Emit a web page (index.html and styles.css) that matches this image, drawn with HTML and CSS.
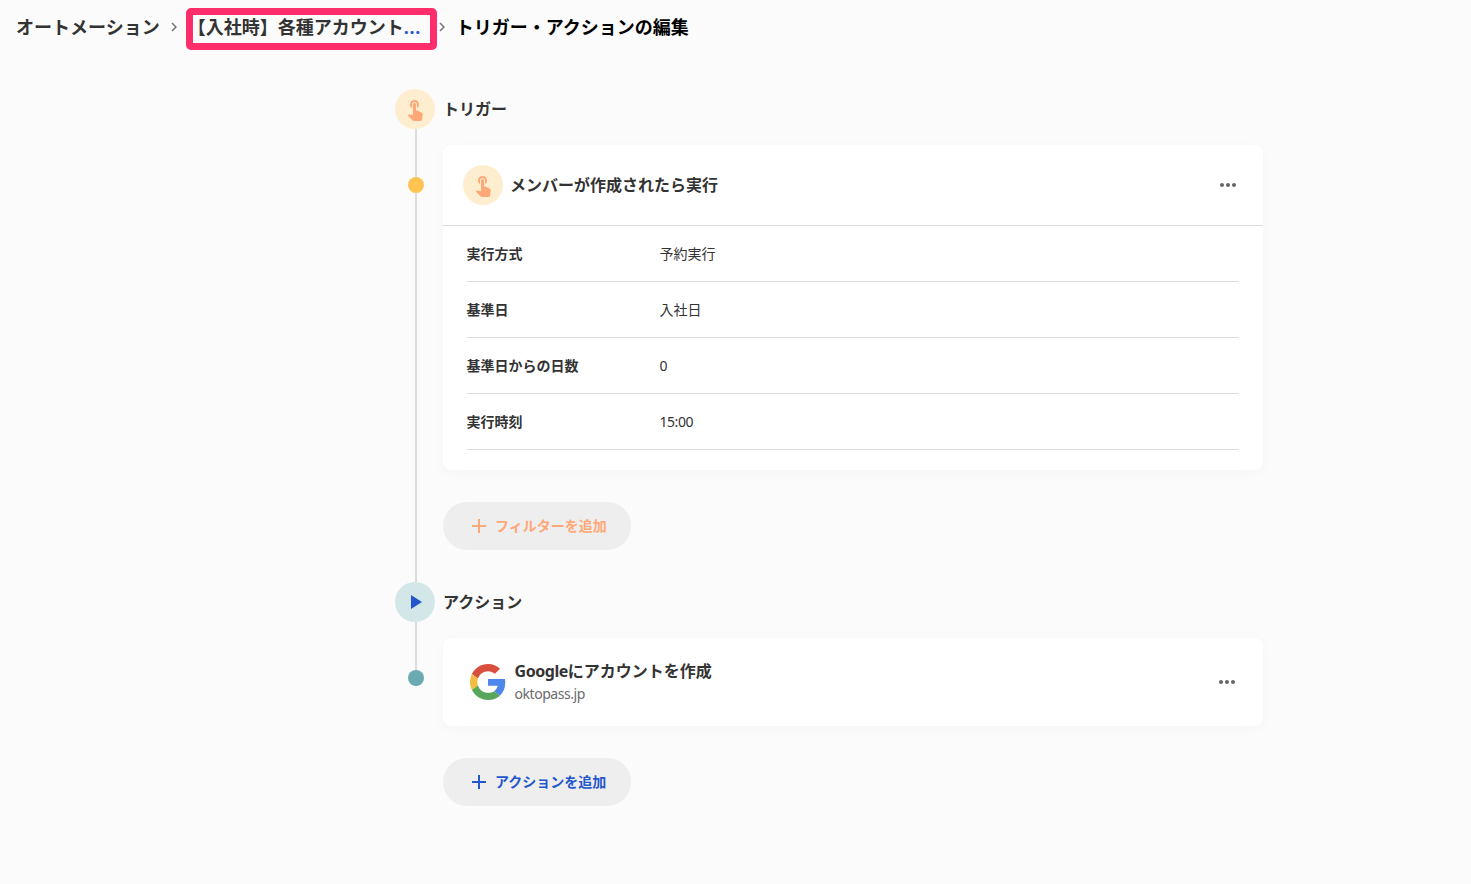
FILE: index.html
```html
<!DOCTYPE html>
<html lang="ja">
<head>
<meta charset="utf-8">
<title>トリガー・アクションの編集</title>
<link rel="stylesheet" href="styles.css">
</head>
<body>
<svg class="symbols" aria-hidden="true">
  <symbol id="touch" viewBox="0 0 24 24"><path d="M9 11.24V7.5C9 6.12 10.12 5 11.5 5S14 6.12 14 7.5v3.74c1.21-.81 2-2.18 2-3.74C16 5.01 13.99 3 11.5 3S7 5.01 7 7.5c0 1.56.79 2.93 2 3.74zm9.84 4.63l-4.54-2.26c-.17-.07-.35-.11-.54-.11H13v-6c0-.83-.67-1.5-1.5-1.5S10 6.67 10 7.5v10.74l-3.43-.72c-.08-.01-.15-.03-.24-.03-.31 0-.59.13-.79.33l-.79.8 4.94 4.94c.27.27.65.44 1.06.44h6.79c.75 0 1.33-.55 1.44-1.28l.75-5.27c.01-.07.02-.14.02-.2 0-.62-.38-1.16-.91-1.38z"/></symbol>
  <symbol id="more" viewBox="0 0 24 24"><path d="M6 10c-1.1 0-2 .9-2 2s.9 2 2 2 2-.9 2-2-.9-2-2-2zm12 0c-1.1 0-2 .9-2 2s.9 2 2 2 2-.9 2-2-.9-2-2-2zm-6 0c-1.1 0-2 .9-2 2s.9 2 2 2 2-.9 2-2-.9-2-2-2z"/></symbol>
  <symbol id="add" viewBox="0 0 24 24"><path d="M19 13h-6v6h-2v-6H5v-2h6V5h2v6h6v2z"/></symbol>
  <symbol id="play" viewBox="0 0 24 24"><path d="M8 5v14l11-7z"/></symbol>
  <symbol id="chevron" viewBox="0 0 24 24"><path d="M10 6L8.59 7.41 13.17 12l-4.58 4.59L10 18l6-6z"/></symbol>
</svg>

<nav class="breadcrumb">
  <a class="crumb">オートメーション</a>
  <svg class="chevron"><use href="#chevron"/></svg>
  <a class="crumb crumb-highlighted"><span>【入社時】各種アカウント</span><span class="ellipsis">...</span></a>
  <svg class="chevron"><use href="#chevron"/></svg>
  <span class="crumb crumb-current">トリガー・アクションの編集</span>
</nav>

<main class="flow">
  <section class="step">
    <div class="rail">
      <div class="badge badge-trigger"><svg class="icon"><use href="#touch"/></svg></div>
      <div class="line line-short"></div>
      <div class="dot dot-trigger"></div>
      <div class="line line-fill"></div>
    </div>
    <div class="step-body">
      <h2 class="step-title">トリガー</h2>
      <article class="card">
        <header class="card-header">
          <div class="badge badge-trigger"><svg class="icon"><use href="#touch"/></svg></div>
          <h3 class="card-title">メンバーが作成されたら実行</h3>
          <button class="more" aria-label="メニュー"><svg class="icon"><use href="#more"/></svg></button>
        </header>
        <dl class="details">
          <div class="row"><dt>実行方式</dt><dd>予約実行</dd></div>
          <div class="row"><dt>基準日</dt><dd>入社日</dd></div>
          <div class="row"><dt>基準日からの日数</dt><dd class="latin">0</dd></div>
          <div class="row"><dt>実行時刻</dt><dd class="latin">15:00</dd></div>
        </dl>
      </article>
      <button class="add add-filter"><svg class="icon"><use href="#add"/></svg><span>フィルターを追加</span></button>
    </div>
  </section>

  <section class="step">
    <div class="rail">
      <div class="badge badge-action"><svg class="icon"><use href="#play"/></svg></div>
      <div class="line line-short"></div>
      <div class="dot dot-action"></div>
    </div>
    <div class="step-body">
      <h2 class="step-title">アクション</h2>
      <article class="card action">
        <svg class="google" viewBox="0 0 48 48">
          <path fill="#d94f3d" d="M24 9.5c3.54 0 6.71 1.22 9.21 3.6l6.85-6.85C35.9 2.38 30.47 0 24 0 14.62 0 6.51 5.38 2.56 13.22l7.98 6.19C12.43 13.72 17.74 9.5 24 9.5z"/>
          <path fill="#4f86ec" d="M46.98 24.55c0-1.57-.15-3.09-.38-4.55H24v9.02h12.94c-.58 2.96-2.26 5.48-4.78 7.18l7.73 6c4.51-4.18 7.09-10.36 7.09-17.65z"/>
          <path fill="#f2bd42" d="M10.53 28.59c-.48-1.45-.76-2.99-.76-4.59s.27-3.14.76-4.59l-7.98-6.19C.92 16.46 0 20.12 0 24s.92 7.54 2.56 10.78l7.97-6.19z"/>
          <path fill="#58a55c" d="M24 48c6.48 0 11.93-2.13 15.89-5.81l-7.73-6c-2.15 1.45-4.92 2.3-8.16 2.3-6.26 0-11.57-4.22-13.47-9.91l-7.98 6.19C6.51 42.62 14.62 48 24 48z"/>
        </svg>
        <div class="action-text">
          <h3 class="card-title"><span class="latin">Google</span>にアカウントを作成</h3>
          <p class="domain latin">oktopass.jp</p>
        </div>
        <button class="more" aria-label="メニュー"><svg class="icon"><use href="#more"/></svg></button>
      </article>
      <button class="add add-action"><svg class="icon"><use href="#add"/></svg><span>アクションを追加</span></button>
    </div>
  </section>
</main>
</body>
</html>
```
FILE: styles.css
```css
*, *::before, *::after { box-sizing: border-box; }

body {
  margin: 0;
  background: #fbfbfb;
  color: #333;
  font-family: "Noto Sans", "Noto Sans CJK JP", sans-serif;
  font-size: 14px;
}

h2, h3, p, dl, dd { margin: 0; }

button {
  border: 0;
  padding: 0;
  background: none;
  font: inherit;
}

.symbols { display: none; }

.latin { letter-spacing: -.45px; }

.icon {
  display: block;
  flex: none;
  width: 24px;
  height: 24px;
  fill: currentColor;
}

.breadcrumb {
  display: flex;
  align-items: center;
  height: 54px;
  padding-left: 16px;
  font-size: 18px;
  font-weight: 700;
  line-height: 26px;
  white-space: nowrap;
}

.chevron {
  flex: none;
  width: 18px;
  height: 18px;
  margin: 0 5px;
  fill: #777;
}

.crumb-highlighted {
  position: relative;
  display: flex;
  width: 240px;
}

.crumb-highlighted::after {
  content: "";
  position: absolute;
  top: -6px;
  left: -2px;
  width: 251px;
  height: 42px;
  border: 7px solid #ff2d6b;
  border-radius: 5px;
}

.ellipsis {
  color: #2a5bd0;
  letter-spacing: .7px;
}

.crumb-current { color: #000; }

.flow {
  width: 868px;
  margin: 35px 0 0 395px;
}

.step {
  display: grid;
  grid-template-columns: 40px 820px;
  column-gap: 8px;
}

.rail {
  display: flex;
  flex-direction: column;
}

.line {
  width: 2px;
  margin-left: 20px;
  background: #dcdcdc;
}

.line-short { height: 48px; }
.line-fill { flex: 1; }

.dot {
  width: 16px;
  height: 16px;
  margin-left: 13px;
  border-radius: 50%;
}

.dot-trigger { background: #ffc550; }
.dot-action { background: #6aaab0; }

.badge {
  display: flex;
  flex: none;
  align-items: center;
  justify-content: center;
  width: 40px;
  height: 40px;
  border-radius: 50%;
}

.badge-trigger {
  background: #ffedcf;
  color: #ffa877;
}

.badge-action {
  background: #d3e7e8;
  color: #2457cc;
}

.step-body { padding-bottom: 32px; }

.step-title {
  height: 40px;
  margin-bottom: 16px;
  font-size: 16px;
  line-height: 40px;
}

.card {
  margin-bottom: 32px;
  border-radius: 8px;
  background: #fff;
  box-shadow: 0 4px 16px rgba(0, 0, 0, .025);
}

.card-header {
  display: flex;
  align-items: center;
  gap: 7px;
  height: 81px;
  padding: 0 23px 0 20px;
  border-bottom: 1px solid #dcdcdc;
}

.card-title {
  font-size: 16px;
  line-height: 24px;
}

.more {
  margin-left: auto;
  color: #666;
}

.details { padding: 0 24px 20px; }

.row {
  display: grid;
  grid-template-columns: 25% 75%;
  align-items: center;
  height: 56px;
  border-bottom: 1px solid #dcdcdc;
  line-height: 20px;
}

.row dt,
.row dd { margin-left: -.5px; }

.row dt { font-weight: 700; }

.action {
  display: flex;
  align-items: center;
  height: 88px;
  padding: 0 24px 0 26.5px;
}

.google {
  flex: none;
  width: 36px;
  height: 36px;
}

.action-text {
  margin-left: 9px;
  padding-bottom: 1px;
}

.domain {
  color: #6b6b6b;
  line-height: 21px;
}

.add {
  display: flex;
  align-items: center;
  gap: 4px;
  width: 188px;
  height: 48px;
  padding: 0 24px;
  border-radius: 24px;
  background: #eee;
  font-weight: 700;
  line-height: 20px;
  white-space: nowrap;
}

.add-filter { color: #ffa877; }
.add-action { color: #2457cc; }
```
